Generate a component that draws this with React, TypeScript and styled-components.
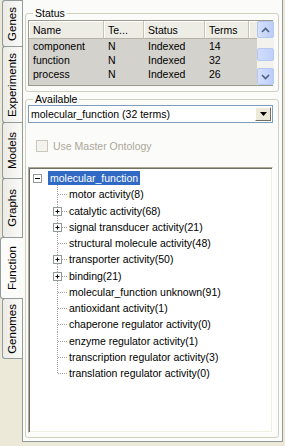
import React from 'react';
import styled, { createGlobalStyle } from 'styled-components';

const Global = createGlobalStyle`
  html, body { margin: 0; padding: 0; background: #ECE9D8; }
  body { font-family: "Liberation Sans", Arial, sans-serif; font-size: 10.5px; color: #000; }
  * { box-sizing: border-box; }
`;

const Window = styled.div`
  width: 285px;
  height: 446px;
  display: flex;
  background: #ECE9D8;
  overflow: hidden;
`;

const TabStrip = styled.div`
  width: 22px;
  flex-shrink: 0;
  display: flex;
  flex-direction: column;
  padding-top: 1px;
  position: relative;
  z-index: 2;
`;

const Tab = styled.div<{ $h: number; $active?: boolean }>`
  height: ${p => p.$h}px;
  flex-shrink: 0;
  margin-top: -1px;
  margin-left: ${p => (p.$active ? 0 : 2)}px;
  margin-right: ${p => (p.$active ? -1 : 0)}px;
  border: 1px solid #919B9C;
  border-right: none;
  border-radius: 3px 0 0 3px;
  background: ${p => (p.$active ? '#FBFBF9' : 'linear-gradient(to right, #ECEBE6, #FAFAF7)')};
  display: flex;
  align-items: center;
  justify-content: center;
  position: relative;
  z-index: ${p => (p.$active ? 2 : 1)};
`;

const TabLabel = styled.span`
  writing-mode: vertical-rl;
  transform: rotate(180deg);
  font-size: 11.5px;
  line-height: 13px;
  white-space: nowrap;
`;

const Panel = styled.div`
  flex: 1;
  margin: 0 2px 4px 0;
  border: 1px solid #919B9C;
  border-top: none;
  background: #FBFBF9;
  padding: 0 3px 3px 2px;
  display: flex;
  flex-direction: column;
  min-width: 0;
`;

const Group = styled.fieldset<{ $grow?: boolean; $top: number }>`
  margin: ${p => p.$top}px 0 0 0;
  padding: 0 5px ${p => (p.$grow ? 4 : 5)}px 2px;
  border: 1px solid #D0D0BF;
  border-radius: 3px;
  display: flex;
  flex-direction: column;
  min-width: 0;
  flex: ${p => (p.$grow ? 1 : 'none')};
  min-height: 0;
`;

const Legend = styled.legend`
  margin-left: 5px;
  padding: 0 2px;
  font-size: 10.5px;
  line-height: 12px;
  color: #000;
`;

/* ---------- status table ---------- */

const Table = styled.div`
  margin-top: 1px;
  height: 66px;
  border: 1px solid #9C9A8E;
  display: flex;
  background: #D4D2CC;
`;

const Columns = styled.div`
  flex: 1;
  display: grid;
  grid-template-columns: 75px 40px 61px 44px 1fr;
  grid-template-rows: 18px repeat(3, 14px);
  align-content: start;
`;

const HeadCell = styled.div`
  background: #EEEDE5;
  border-right: 1px solid #C7C5B2;
  border-bottom: 1px solid #B4B2A5;
  box-shadow: inset 1px 1px 0 #FFFFFF;
  padding: 0 4px;
  display: flex;
  align-items: center;
  white-space: nowrap;
  overflow: hidden;
`;

const HeadFill = styled(HeadCell)`
  border-right: none;
`;

const Cell = styled.div`
  padding: 0 4px;
  display: flex;
  align-items: center;
  white-space: nowrap;
  overflow: hidden;
`;

const ScrollBar = styled.div`
  width: 17px;
  flex-shrink: 0;
  display: flex;
  flex-direction: column;
  background: #F3F2EC;
`;

const ScrollBtn = styled.div`
  height: 17px;
  flex-shrink: 0;
  border: 1px solid #B5C8F3;
  border-radius: 2px;
  background: linear-gradient(to right, #D4E0FC, #BCCDF8);
  display: flex;
  align-items: center;
  justify-content: center;
`;

const Track = styled.div`
  flex: 1;
  display: flex;
  flex-direction: column;
  justify-content: center;
`;

const Thumb = styled.div`
  height: 13px;
  margin-top: 2px;
  border: 1px solid #B5C8F3;
  border-radius: 2px;
  background: linear-gradient(to right, #D0DDFC, #BFD0FA);
`;

const Arrow = ({ up }: { up?: boolean }) => (
  <svg width="9" height="6" viewBox="0 0 9 6">
    <polyline
      points={up ? '1,5 4.5,1.5 8,5' : '1,1 4.5,4.5 8,1'}
      fill="none"
      stroke="#4D6185"
      strokeWidth="1.6"
    />
  </svg>
);

/* ---------- combo ---------- */

const Combo = styled.div`
  height: 18px;
  border: 1px solid #7F9DB9;
  background: #FFFFFF;
  display: flex;
  align-items: center;
  padding: 1px 1px 1px 2px;
`;

const ComboText = styled.span`
  flex: 1;
  white-space: nowrap;
  overflow: hidden;
`;

const ComboBtn = styled.div`
  width: 16px;
  height: 14px;
  background: #ECE9D8;
  border: 1px solid;
  border-color: #FFFFFF #716F64 #716F64 #FFFFFF;
  display: flex;
  align-items: center;
  justify-content: center;
`;

/* ---------- check ---------- */

const CheckRow = styled.label`
  margin-top: 16px;
  height: 14px;
  display: flex;
  align-items: center;
  padding-left: 8px;
  gap: 5px;
  color: #ACA899;
`;

const CheckBox = styled.span`
  width: 12px;
  height: 12px;
  border: 1px solid #CAC8BB;
  background: #F4F3EE;
  flex-shrink: 0;
`;

/* ---------- tree ---------- */

const Tree = styled.div`
  margin-top: 14px;
  flex: 1;
  min-height: 0;
  background: #FFFFFF;
  border: 1px solid;
  border-color: #ACA899 #FFFFFF #FFFFFF #ACA899;
  box-shadow: inset 1px 1px 0 #716F64, inset -1px -1px 0 #F1EFE2;
  padding: 2px 2px 0 2px;
  overflow: hidden;
`;

const TreeRow = styled.div<{ $indent: number }>`
  height: 16.25px;
  display: flex;
  align-items: center;
  padding-left: ${p => p.$indent}px;
  white-space: nowrap;
`;

const NodeLabel = styled.span<{ $selected?: boolean }>`
  padding: 0 2px;
  line-height: 14px;
  background: ${p => (p.$selected ? '#316AC5' : 'transparent')};
  color: ${p => (p.$selected ? '#FFFFFF' : '#000000')};
`;

const RootBox = styled.svg`
  flex-shrink: 0;
  margin-right: 6px;
`;

const ConnectorSvg = styled.svg`
  flex-shrink: 0;
  overflow: visible;
`;

const LINE = '#A0A0A0';

const Connector = ({ last, expandable }: { last?: boolean; expandable?: boolean }) => (
  <ConnectorSvg width="19" height="16" viewBox="0 0 19 16">
    <line x1="9.5" y1="-1" x2="9.5" y2={last ? 8.5 : 17} stroke={LINE} strokeDasharray="1 1" />
    <line x1="10" y1="8.5" x2="19" y2="8.5" stroke={LINE} strokeDasharray="1 1" />
    {expandable && (
      <>
        <rect x="5.5" y="4.5" width="8" height="8" fill="#FFFFFF" stroke="#919B9C" />
        <line x1="7.5" y1="8.5" x2="11.5" y2="8.5" stroke="#000" />
        <line x1="9.5" y1="6.5" x2="9.5" y2="10.5" stroke="#000" />
      </>
    )}
  </ConnectorSvg>
);

const tabs = [
  { label: 'Genes', h: 47 },
  { label: 'Experiments', h: 77 },
  { label: 'Models', h: 57 },
  { label: 'Graphs', h: 60 },
  { label: 'Function', h: 62, active: true },
  { label: 'Genomes', h: 61 },
];

const rows = [
  ['component', 'N', 'Indexed', '14'],
  ['function', 'N', 'Indexed', '32'],
  ['process', 'N', 'Indexed', '26'],
];

const children: { label: string; exp?: boolean }[] = [
  { label: 'motor activity(8)' },
  { label: 'catalytic activity(68)', exp: true },
  { label: 'signal transducer activity(21)', exp: true },
  { label: 'structural molecule activity(48)' },
  { label: 'transporter activity(50)', exp: true },
  { label: 'binding(21)', exp: true },
  { label: 'molecular_function unknown(91)' },
  { label: 'antioxidant activity(1)' },
  { label: 'chaperone regulator activity(0)' },
  { label: 'enzyme regulator activity(1)' },
  { label: 'transcription regulator activity(3)' },
  { label: 'translation regulator activity(0)' },
];

export default function App() {
  return (
    <>
      <Global />
      <Window>
        <TabStrip>
          {tabs.map(t => (
            <Tab key={t.label} $h={t.h} $active={t.active}>
              <TabLabel>{t.label}</TabLabel>
            </Tab>
          ))}
        </TabStrip>
        <Panel>
          <Group $top={7}>
            <Legend>Status</Legend>
            <Table>
              <Columns>
                <HeadCell>Name</HeadCell>
                <HeadCell>Te...</HeadCell>
                <HeadCell>Status</HeadCell>
                <HeadCell>Terms</HeadCell>
                <HeadFill />
                {rows.map(r => (
                  <React.Fragment key={r[0]}>
                    <Cell>{r[0]}</Cell>
                    <Cell>{r[1]}</Cell>
                    <Cell>{r[2]}</Cell>
                    <Cell>{r[3]}</Cell>
                    <Cell />
                  </React.Fragment>
                ))}
              </Columns>
              <ScrollBar>
                <ScrollBtn>
                  <Arrow up />
                </ScrollBtn>
                <Track>
                  <Thumb />
                </Track>
                <ScrollBtn>
                  <Arrow />
                </ScrollBtn>
              </ScrollBar>
            </Table>
          </Group>
          <Group $top={1} $grow>
            <Legend>Available</Legend>
            <Combo>
              <ComboText>molecular_function (32 terms)</ComboText>
              <ComboBtn>
                <svg width="7" height="4" viewBox="0 0 7 4">
                  <polygon points="0,0 7,0 3.5,4" fill="#000" />
                </svg>
              </ComboBtn>
            </Combo>
            <CheckRow>
              <CheckBox />
              Use Master Ontology
            </CheckRow>
            <Tree>
              <TreeRow $indent={2}>
                <RootBox width="9" height="9" viewBox="0 0 9 9">
                  <rect x="0.5" y="0.5" width="8" height="8" fill="#FFFFFF" stroke="#919B9C" />
                  <line x1="2" y1="4.5" x2="7" y2="4.5" stroke="#000" />
                </RootBox>
                <NodeLabel $selected>molecular_function</NodeLabel>
              </TreeRow>
              {children.map((c, i) => (
                <TreeRow key={c.label} $indent={17}>
                  <Connector last={i === children.length - 1} expandable={c.exp} />
                  <NodeLabel>{c.label}</NodeLabel>
                </TreeRow>
              ))}
            </Tree>
          </Group>
        </Panel>
      </Window>
    </>
  );
}
